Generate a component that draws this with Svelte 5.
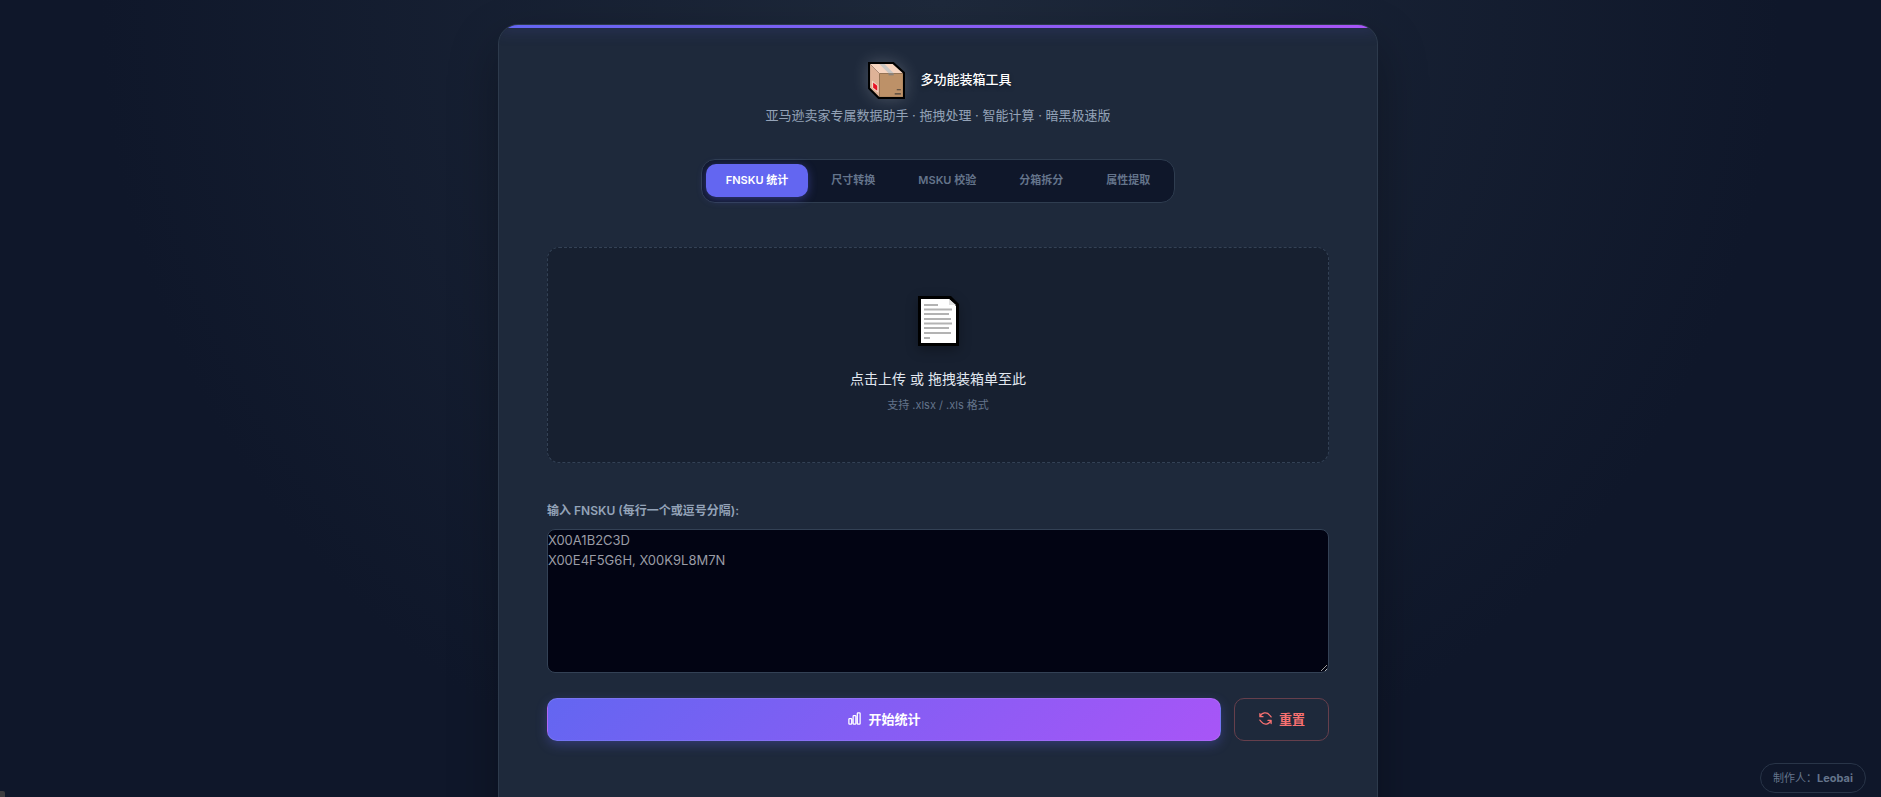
<script>
  const tabs = [
    { id: 'fnsku', label: 'FNSKU 统计' },
    { id: 'size', label: '尺寸转换' },
    { id: 'msku', label: 'MSKU 校验' },
    { id: 'split', label: '分箱拆分' },
    { id: 'attrs', label: '属性提取' },
  ];

  let active = $state('fnsku');
  let fnskus = $state('');

  const hint = 'X00A1B2C3D\nX00E4F5G6H, X00K9L8M7N';
</script>

<div class="page">
  <main class="card">
    <header class="header">
      <div class="brand">
        <svg class="brand__icon" viewBox="0 0 36 36" aria-hidden="true">
          <path d="M0 0H25L36 10V36H10L0 26Z" fill="#000" />
          <path d="M2 2H24L34 11H11Z" fill="#f7d5c0" />
          <path d="M2 2L11 11V34L2 25Z" fill="#deb297" />
          <path d="M11 11H34V34H11Z" fill="#bd9168" />
          <path d="M11 2H16L25 11H20Z" fill="#c8c6c4" />
          <path d="M20 11H25V13H20Z" fill="#8b8279" />
          <path d="M4 18L10 23V30L4 25Z" fill="#f5dccd" />
          <path d="M5 20L9 23V28L5 25Z" fill="#e81224" />
          <path d="M28 27H32M26 31H32" stroke="#4b4139" />
        </svg>
        <h1>多功能装箱工具</h1>
      </div>
      <p>亚马逊卖家专属数据助手 · 拖拽处理 · 智能计算 · 暗黑极速版</p>
    </header>

    <nav class="tabs" aria-label="功能">
      {#each tabs as tab (tab.id)}
        <button
          type="button"
          class="tab"
          class:tab--active={active === tab.id}
          onclick={() => (active = tab.id)}
        >{tab.label}</button>
      {/each}
    </nav>

    <label class="upload">
      <input class="upload__input" type="file" accept=".xlsx,.xls" />
      <svg class="upload__icon" viewBox="0 0 42 52" aria-hidden="true">
        <path d="M1 1H34L42 9V51H1Z" fill="#000" />
        <path d="M4 4H32L39 11V48H4Z" fill="#fff" />
        <path d="M32 4V10H39L32 4Z" fill="#e1e1e1" />
        <path
          d="M7 10H21M7 14.500H35M7 19H32M7 24H34M7 28.500H35M7 33H32M7 38H34M7 43H13"
          stroke="#b3b3b3"
          stroke-width="2"
        />
      </svg>
      <span class="upload__title">点击上传 或 拖拽装箱单至此</span>
      <span class="upload__hint">支持 .xlsx / .xls 格式</span>
    </label>

    <label class="label" for="fnsku-list">输入 FNSKU (每行一个或逗号分隔):</label>
    <textarea id="fnsku-list" placeholder={hint} bind:value={fnskus}></textarea>

    <div class="actions">
      <button type="button" class="btn btn--primary">
        <svg viewBox="0 0 24 24" aria-hidden="true">
          <path
            d="M3 13.100C3 12.500 3.500 12 4.100 12h2.300c.6 0 1.100.5 1.100 1.100v6.800c0 .6-.5 1.100-1.100 1.100H4.100C3.500 21 3 20.500 3 19.900zM9.800 8.600c0-.6.5-1.100 1.100-1.100h2.200c.6 0 1.100.5 1.100 1.100v11.300c0 .6-.5 1.100-1.100 1.100h-2.200c-.6 0-1.100-.5-1.100-1.100zM16.500 4.100c0-.6.5-1.100 1.100-1.100h2.300c.6 0 1.100.5 1.100 1.100v15.800c0 .6-.5 1.100-1.100 1.100h-2.300c-.6 0-1.100-.5-1.100-1.100z"
          />
        </svg>
        开始统计
      </button>
      <button type="button" class="btn btn--reset" onclick={() => (fnskus = '')}>
        <svg viewBox="0 0 24 24" aria-hidden="true">
          <path
            d="M16 15h5v5M3 4v5h5M3.500 9a8.500 8.500 0 0 1 15-2.500l2.500 3M20.500 15a8.500 8.500 0 0 1-15 2.500L3 14.500"
          />
        </svg>
        重置
      </button>
    </div>
  </main>

  <footer class="credit">制作人：<strong>Leobai</strong></footer>
  <div class="corner"></div>
</div>

<style>
  :global(body) {
    background: #0f172a;
    font-family: Inter, 'Noto Sans CJK SC', sans-serif;
  }
  :global(::-webkit-scrollbar) { width: 5px; height: 5px; }

  .page {
    box-sizing: border-box;
    min-height: 100vh;
    padding: 24px 21px 24px 16px;
    background: radial-gradient(circle at 50% 0, #1e293b 0%, #0f172a 65%);
  }

  .card {
    position: relative;
    box-sizing: border-box;
    max-width: 880px;
    min-height: 840px;
    margin: 0 auto;
    padding: 37px 48px 48px;
    overflow: hidden;
    background: #1e293b;
    border: 1px solid #2d3a4c;
    border-radius: 20px;
    box-shadow: 0 20px 50px rgba(0, 0, 0, 0.3);
  }
  .card::before {
    content: '';
    position: absolute;
    inset: 0 0 auto;
    height: 3px;
    background: linear-gradient(90deg, #6366f1, #a855f7);
    box-shadow: 0 0 15px rgba(99, 102, 241, 0.5);
  }

  .header { text-align: center; }
  .brand {
    display: flex;
    align-items: center;
    justify-content: center;
    gap: 15px;
    padding-left: 4px;
  }
  .brand__icon {
    width: 37px;
    height: 37px;
    filter: drop-shadow(0 0 8px rgba(255, 255, 255, 0.2));
  }
  h1 {
    margin: 0;
    padding-bottom: 4px;
    color: #fff;
    font-size: 13px;
    font-weight: 500;
    text-shadow: 0 2px 4px rgba(0, 0, 0, 0.4);
  }
  .header p {
    margin: 6px 0 0;
    color: #94a3b8;
    font-size: 13px;
    line-height: 20px;
  }

  .tabs {
    display: flex;
    gap: 3px;
    box-sizing: border-box;
    width: fit-content;
    margin: 34px auto 44px;
    padding: 4px 4px 5px;
    background: #0f172a;
    border: 1px solid #2f3d50;
    border-radius: 14px;
  }
  .tab {
    height: 33px;
    padding: 0 20px 3px;
    color: #64748b;
    font: 600 11px Inter, 'Noto Sans CJK SC', sans-serif;
    background: none;
    border: 0;
    border-radius: 10px;
    cursor: pointer;
  }
  .tab--active {
    color: #fff;
    background: #6366f1;
    box-shadow: 0 2px 10px rgba(99, 102, 241, 0.4);
  }

  .upload {
    position: relative;
    display: flex;
    flex-direction: column;
    align-items: center;
    padding: 47px 24px 48px;
    background: #172030;
    border: 1px dashed #334155;
    border-radius: 12px;
    cursor: pointer;
  }
  .upload__input {
    position: absolute;
    inset: 0;
    opacity: 0;
    cursor: pointer;
  }
  .upload__icon {
    width: 42px;
    height: 52px;
    filter: drop-shadow(0 4px 6px rgba(0, 0, 0, 0.3));
  }
  .upload__title {
    margin-top: 20px;
    color: #e2e8f0;
    font-size: 14px;
    line-height: 24px;
  }
  .upload__hint {
    margin-top: 5px;
    color: #64748b;
    font-size: 11px;
    line-height: 18px;
  }

  .label {
    display: block;
    margin: 38px 0 8px;
    color: #94a3b8;
    font-size: 12px;
    font-weight: 600;
    line-height: 20px;
  }
  textarea {
    display: block;
    box-sizing: border-box;
    width: 100%;
    height: 144px;
    padding: 0;
    color: #e2e8f0;
    font: 13px/20px Inter, 'Noto Sans CJK SC', sans-serif;
    background: #020413;
    border: 1px solid #334155;
    border-radius: 8px;
    outline: none;
    resize: vertical;
  }
  textarea::placeholder { color: #9a9ca5; }

  .actions {
    display: flex;
    gap: 13px;
    margin-top: 25px;
  }
  .btn {
    display: flex;
    align-items: center;
    justify-content: center;
    gap: 6px;
    height: 43px;
    padding: 0 23px 2px;
    font: 600 13px Inter, 'Noto Sans CJK SC', sans-serif;
    border-radius: 10px;
    cursor: pointer;
  }
  .btn svg {
    width: 15px;
    height: 15px;
    fill: none;
    stroke: currentColor;
    stroke-width: 2;
    stroke-linecap: round;
    stroke-linejoin: round;
  }
  .btn--primary {
    flex: 1;
    color: #fff;
    background: linear-gradient(135deg, #6366f1, #a855f7);
    border: 1px solid rgba(255, 255, 255, 0.1);
    box-shadow: 0 4px 12px rgba(99, 102, 241, 0.3);
  }
  .btn--reset {
    color: #f87171;
    background: none;
    border: 1px solid #663f4c;
  }

  .credit {
    position: fixed;
    right: 15px;
    bottom: 4px;
    padding: 0 12px;
    color: #64748b;
    font-size: 11px;
    line-height: 28px;
    background: #0f172a;
    border: 1px solid #293548;
    border-radius: 20px;
  }
  .corner {
    position: fixed;
    left: 0;
    bottom: 0;
    width: 5px;
    height: 6px;
    background: #3c3c3f;
    border-top-right-radius: 2px;
  }
</style>
